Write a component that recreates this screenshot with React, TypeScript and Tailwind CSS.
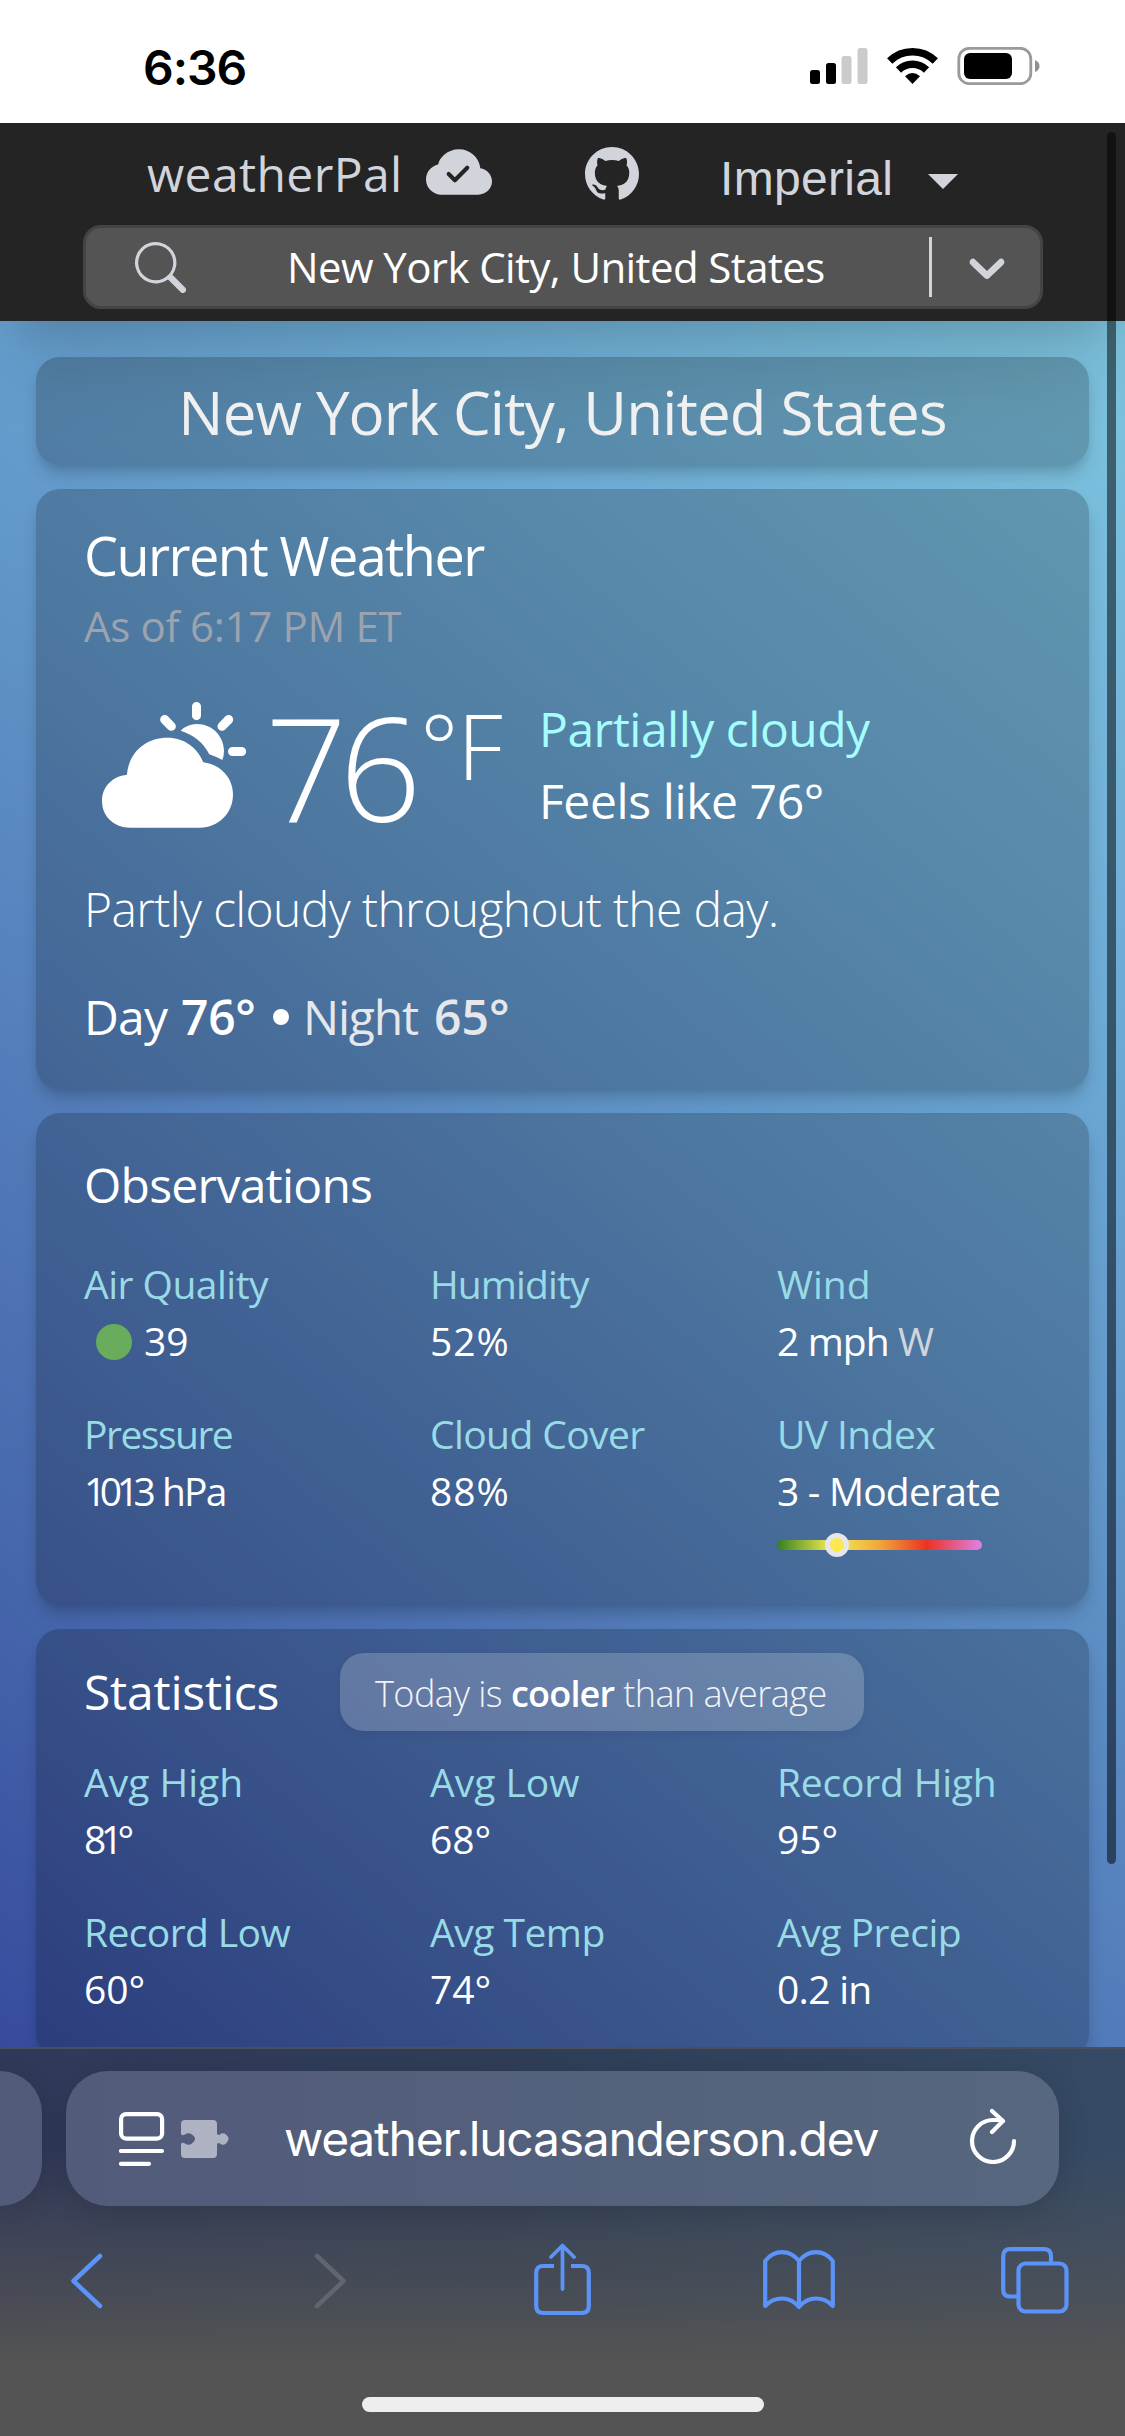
import type { ReactNode } from 'react';
import { BsCloudCheckFill, BsGithub, BsSearch } from 'react-icons/bs';

const card = 'rounded-[24px] bg-black/20 shadow-[0_12px_18px_-3px_rgba(0,0,0,0.16),0_6px_12px_-6px_rgba(0,0,0,0.16)]';

function StatusBar() {
  return (
    <div className="flex h-[123px] items-start bg-white">
      <div className="ml-[143px] mt-[36px] w-[667px] font-['Inter'] text-[48px] font-semibold leading-[64px] tracking-[-1px] text-black">
        6:36
      </div>
      <svg className="mt-[47px]" width="58" height="38" viewBox="0 0 58 38">
        <rect x="0" y="23" width="10" height="14" rx="2.5" />
        <rect x="16" y="16" width="10" height="21" rx="2.5" />
        <rect x="31.500" y="9" width="10" height="28" rx="2.500" fill="#cbcbcb" />
        <rect x="47.500" y="1" width="10" height="36" rx="2.500" fill="#cbcbcb" />
      </svg>
      <svg className="ml-[19px] mt-[47px]" width="51" height="38" viewBox="0 0 51 38" fill="none" stroke="#000">
        <path d="M2.700 14A32.500 32.500 0 0 1 48.300 14" strokeWidth="7.500" />
        <path d="M11.500 23A20 20 0 0 1 39.500 23" strokeWidth="7.500" />
        <path d="M25.500 37L18 29.300Q25.500 22.500 33 29.300Z" fill="#000" stroke="none" />
      </svg>
      <svg className="ml-[19px] mt-[47px]" width="84" height="38" viewBox="0 0 84 38">
        <rect x="1.800" y="1.300" width="72" height="35.400" rx="10.500" fill="none" stroke="#9a9a9a" strokeWidth="2.800" />
        <rect x="7" y="6" width="48" height="26" rx="6" />
        <path d="M78 13Q82.500 15 82.500 19T78 25Z" fill="#8f8f8f" />
      </svg>
    </div>
  );
}

function Header() {
  return (
    <header className="h-[198px] bg-[#242424] text-[#d1d5db] shadow-[0_60px_75px_-15px_rgba(0,0,0,0.12),0_24px_30px_-18px_rgba(0,0,0,0.1)]">
      <div className="flex h-[102px] items-start pl-[147px]">
        <div className="mt-[19px] w-[279px] text-[48px] leading-[64px] tracking-[0.4px]">weatherPal</div>
        <BsCloudCheckFill className="mt-[18px] size-[66px]" />
        <BsGithub className="ml-[93px] mt-[24px] size-[54px]" />
        <div className="ml-[81px] mt-[24px] w-[208px] font-['Liberation_Sans'] text-[48px] leading-[64px] tracking-[0.3px]">
          Imperial
        </div>
        <svg className="mt-[51px]" width="30" height="15" viewBox="0 0 30 15" fill="currentColor">
          <path d="M0 0H30L15 15Z" />
        </svg>
      </div>
      <div className="ml-[83px] flex h-[84px] w-[960px] items-center rounded-[18px] border-[3px] border-[#444444] bg-[#545454]">
        <BsSearch className="ml-[49px] size-[51px]" />
        <div className="ml-[101px] w-[642px] text-[42px] leading-[60px] tracking-[-0.6px] text-white">
          New York City, United States
        </div>
        <div className="h-[60px] w-[3px] bg-[#d1d5db]" />
        <svg className="ml-[25px]" width="60" height="60" viewBox="0 0 20 20" fill="currentColor">
          <path d="M4.516 7.548c0.436-0.446 1.043-0.481 1.576 0l3.908 3.747 3.908-3.747c0.533-0.481 1.141-0.446 1.574 0 0.436 0.445 0.408 1.197 0 1.615-0.406 0.418-4.695 4.502-4.695 4.502-0.217 0.223-0.502 0.335-0.787 0.335s-0.570-0.112-0.789-0.335c0 0-4.287-4.084-4.695-4.502s-0.436-1.170 0-1.615z" />
        </svg>
      </div>
    </header>
  );
}

function CloudSunIcon() {
  return (
    <svg className="ml-[18px] mt-[9px]" width="144" height="126" viewBox="66 36 432 378" fill="#fff">
      <path d="M141 254C146 188 196 143 262 143C312 143 352 172 370 217C424 224 459 266 459 313C459 370 415 413 360 413H150C102 413 66 379 66 333C66 291 96 259 141 254Z" />
      <path d="M302 122Q322 102 350 102C398 102 432 140 432 183Q432 198 427 210Q408 200 388 193C369 155 340 135 302 122Z" />
      <path d="M349.500 49.500V77M254 88.500L274 109M446 88.500L426 109M457.500 184.500H485" stroke="#fff" strokeWidth="27" strokeLinecap="round" />
    </svg>
  );
}

function Item({ label, labelClass = '', children }: { label: string; labelClass?: string; children: ReactNode }) {
  return (
    <div className="text-[39px] leading-[57px]">
      <div className={`text-[#98dbe6] ${labelClass}`}>{label}</div>
      {children}
    </div>
  );
}

function CurrentWeather() {
  return (
    <section className={`mt-[24px] h-[600px] pl-[48px] pt-[30px] ${card}`}>
      <h2 className="text-[54px] leading-[72px] tracking-[-1.55px]">Current Weather</h2>
      <div className="mt-[5px] text-[42px] leading-[60px] tracking-[-0.3px] text-[#9ca3af]">As of 6:17 PM ET</div>
      <div className="mt-[37px] flex h-[146px] items-start">
        <CloudSunIcon />
        <div className="ml-[19px] mt-px w-[155px] whitespace-nowrap text-[144px] font-light leading-[144px] tracking-[-8px]">76</div>
        <div className="mt-[7px] w-[119px] whitespace-nowrap text-[90px] font-light leading-[90px] tracking-[-1px]">°F</div>
        <div className="text-[48px] leading-[72px]">
          <div className="tracking-[-0.5px] text-[#a5fdfd]">Partially cloudy</div>
          <div className="tracking-[-0.4px]">Feels like 76°</div>
        </div>
      </div>
      <div className="mt-[37px] text-[48px] font-light leading-[66px] tracking-[-0.63px]">Partly cloudy throughout the day.</div>
      <div className="mt-[42px] flex items-center text-[48px] leading-[66px]">
        <span className="w-[97px] tracking-[-0.8px]">Day</span>
        <span className="w-[92px] font-semibold tracking-[-0.3px]">76°</span>
        <span className="mr-[14px] size-[16px] rounded-full bg-white" />
        <span className="w-[131px] tracking-[-1.2px] text-[#e5e7eb]">Night</span>
        <span className="font-semibold text-[#e5e7eb]">65°</span>
      </div>
    </section>
  );
}

function Observations() {
  return (
    <section className={`mt-[24px] h-[492px] pl-[48px] pt-[39px] ${card}`}>
      <h2 className="text-[48px] leading-[66px] tracking-[-0.75px]">Observations</h2>
      <div className="mt-[37px] grid grid-cols-[346px_347px_1fr] gap-y-[36px]">
        <Item label="Air Quality" labelClass="tracking-[-0.5px]">
          <div className="flex items-center">
            <span className="ml-[12px] mr-[12px] mt-[2px] size-[36px] rounded-full bg-[#69ac5b]" />
            39
          </div>
        </Item>
        <Item label="Humidity" labelClass="tracking-[-0.9px]">
          <div className="tracking-[1px]">52%</div>
        </Item>
        <Item label="Wind">
          <div className="tracking-[-0.9px]">
            2 mph <span className="text-[#d1d5db]">W</span>
          </div>
        </Item>
        <Item label="Pressure" labelClass="tracking-[-1.5px]">
          <div className="tracking-[-1.9px]">
            <span className="tracking-[-6.5px]">1</span>
            <span className="tracking-[-5.5px]">0</span>
            <span className="tracking-[-5.5px]">1</span>3 hPa
          </div>
        </Item>
        <Item label="Cloud Cover" labelClass="tracking-[-0.6px]">
          <div className="tracking-[1px]">88%</div>
        </Item>
        <Item label="UV Index" labelClass="tracking-[-0.6px]">
          <div className="tracking-[-0.8px]">3 - Moderate</div>
          <div className="relative mt-[21px] h-[10px] w-[205px] rounded-full bg-[linear-gradient(90deg,#34811f_0%,#f5ee55_27%,#f0a83a_50%,#ea3323_73%,#dd7ddb_98%)]">
            <span className="absolute -top-[7px] left-[48px] size-[24px] rounded-full border-[5px] border-[#e5e7eb] bg-[#fbe94f]" />
          </div>
        </Item>
      </div>
    </section>
  );
}

function Statistics() {
  return (
    <section className={`mt-[24px] h-[428px] pl-[48px] pt-[24px] ${card}`}>
      <div className="flex h-[78px] items-center">
        <h2 className="w-[256px] text-[48px] leading-[66px] tracking-[-0.2px]">Statistics</h2>
        <div className="h-[78px] w-[524px] rounded-[24px] bg-white/20 pl-[35px] text-[36px] font-light leading-[82px] tracking-[-0.52px] text-[#f3f4f6] shadow-[0_3px_9px_rgba(0,0,0,0.06)]">
          Today is <span className="font-semibold tracking-[-0.8px] text-white">cooler</span> than average
        </div>
      </div>
      <div className="mt-[22px] grid grid-cols-[346px_347px_1fr] gap-y-[36px]">
        <Item label="Avg High">
          <div className="tracking-[-5.5px]">81°</div>
        </Item>
        <Item label="Avg Low">68°</Item>
        <Item label="Record High" labelClass="tracking-[-0.2px]">95°</Item>
        <Item label="Record Low" labelClass="tracking-[-0.6px]">60°</Item>
        <Item label="Avg Temp" labelClass="tracking-[-0.5px]">74°</Item>
        <Item label="Avg Precip" labelClass="tracking-[-0.5px]">
          <div className="tracking-[-0.7px]">0.2 in</div>
        </Item>
      </div>
    </section>
  );
}

function BrowserBar() {
  return (
    <footer className="h-[389px] border-t-2 border-[#4a4f5e] bg-[linear-gradient(180deg,rgba(84,84,84,0)_25%,rgba(84,84,84,0.5)_55%,#545454_82%),linear-gradient(90deg,#31395a,#2f3e57_45%,#364a65)]">
      <div className="mt-[22px] flex h-[135px] gap-[24px]">
        <div className="h-[135px] w-[42px] rounded-r-[42px] bg-[#535b7b] shadow-[0_6px_30px_rgba(0,0,0,0.14)]" />
        <div className="flex h-[135px] w-[993px] items-start rounded-[42px] bg-[linear-gradient(90deg,#535b7b,#53607b_45%,#57677f)] shadow-[0_6px_30px_rgba(0,0,0,0.14)]">
          <svg className="ml-[53px] mt-[41px]" width="46" height="54" viewBox="0 0 46 54" fill="none" stroke="#fff" strokeWidth="4.200">
            <rect x="2.100" y="2.100" width="41" height="24.500" rx="5" />
            <path d="M2 39H43M2 51.800H30" strokeLinecap="round" />
          </svg>
          <svg className="ml-[16px] mt-[49px]" width="48" height="38" viewBox="0 0 48 38" fill="#afb2c3">
            <path d="M4 0H32Q36 0 36 4V14Q37.500 15.500 39 14.500Q42 12 45 14.500Q47.500 16.500 47.500 19T45 23.500Q42 26 39 23.500Q37.500 22.500 36 24V34Q36 38 32 38H4Q0 38 0 34V24Q1 22 4 23.500Q7.500 26 11 23.500Q14 21.500 14 19T11 14.500Q7.500 12 4 14.500Q1 16 0 14V4Q0 0 4 0Z" />
          </svg>
          <div className="ml-[55px] mt-[34px] w-[686px] whitespace-nowrap font-['Inter'] text-[48px] leading-[68px] tracking-[-1.25px] text-white">
            weather.lucasanderson.dev
          </div>
          <svg className="-ml-px mt-[37px]" width="48" height="56" viewBox="0 0 48 56" fill="none" stroke="#fff" strokeWidth="4.200" strokeLinecap="round" strokeLinejoin="round">
            <path d="M45 33A21 21 0 1 1 24 12H33M23 3L34 13L23 24" />
          </svg>
        </div>
      </div>
      <nav className="mt-[36px] flex h-[74px] items-start">
        <svg className="ml-[70px] mt-[11px]" width="34" height="56" viewBox="0 0 34 56" fill="none" stroke="#5b93f8" strokeWidth="4.500" strokeLinecap="round" strokeLinejoin="round">
          <path d="M30 3L3.500 28L30 53" />
        </svg>
        <svg className="ml-[209px] mt-[11px]" width="34" height="56" viewBox="0 0 34 56" fill="none" stroke="#62656f" strokeWidth="4.500" strokeLinecap="round" strokeLinejoin="round">
          <path d="M4 3L30.500 28L4 53" />
        </svg>
        <svg className="ml-[187px] mt-px" width="57" height="73" viewBox="0 0 57 73" fill="none" stroke="#5b93f8" strokeWidth="4.200" strokeLinecap="round" strokeLinejoin="round">
          <path d="M20 23H9Q2.200 23 2.200 30V63Q2.200 70 9 70H48Q54.800 70 54.800 63V30Q54.800 23 48 23H37" strokeLinecap="butt" />
          <path d="M28.500 46V3M17 14L28.500 2.500L40 14" strokeWidth="3.800" />
        </svg>
        <svg className="ml-[172px] mt-[8px]" width="72" height="60" viewBox="0 0 72 60" fill="none" stroke="#5b93f8" strokeWidth="4.200" strokeLinejoin="round">
          <path d="M36 11Q29 2.200 19 2.200T2.200 11V56Q9 48.500 19 48.500T36 57Q43 48.500 53 48.500T69.800 56V11Q63 2.200 53 2.200T36 11V57" />
        </svg>
        <svg className="ml-[166px] mt-[5px]" width="68" height="67" viewBox="0 0 68 67" fill="none" stroke="#5b93f8" strokeWidth="4.200">
          <rect x="17.500" y="16.500" width="48" height="48" rx="7" />
          <path d="M17.500 49.500H9Q2.200 49.500 2.200 43V9Q2.200 2.200 9 2.200H43Q50 2.200 50 9V16.500" />
        </svg>
      </nav>
      <div className="ml-[362px] mt-[81px] h-[15px] w-[402px] rounded-full bg-[#eeeeee]" />
    </footer>
  );
}

export default function App() {
  return (
    <div className="relative h-[2436px] w-[1125px] overflow-hidden font-['Open_Sans','Noto_Sans',sans-serif] text-white">
      <StatusBar />
      <div className="h-[1924px] overflow-hidden bg-[linear-gradient(220deg,#7dc3de_8%,#6eacd6_30%,#6196c9_48%,#527bb9_67%,#4565ab_84%,#374b9d_100%)]">
        <Header />
        <main className="px-[36px] pt-[36px]">
          <div className={`h-[108px] text-center text-[60px] leading-[110px] tracking-[-0.85px] text-[#f0f0f0] ${card}`}>
            New York City, United States
          </div>
          <CurrentWeather />
          <Observations />
          <Statistics />
        </main>
      </div>
      <BrowserBar />
      <div className="absolute left-[1107px] top-[132px] h-[1732px] w-[9px] rounded-full bg-black/50" />
    </div>
  );
}
